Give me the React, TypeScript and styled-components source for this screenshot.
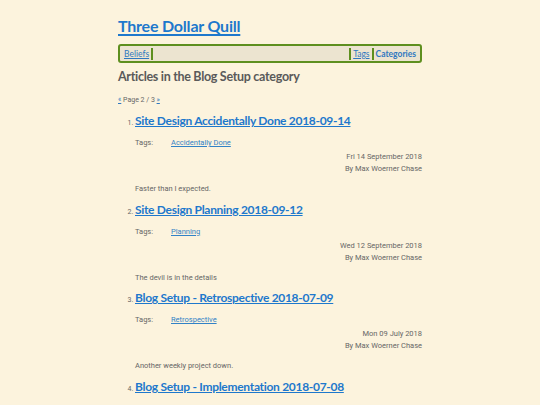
import React from "react";
import styled, { createGlobalStyle } from "styled-components";

const Global = createGlobalStyle`
  html, body { margin: 0; padding: 0; background: #fcf3dd; }
  body { font-family: "Roboto", "DejaVu Serif", serif; }
`;

const headFont = `"Lato", "Noto Sans", sans-serif`;

const Page = styled.div`
  width: 304px;
  margin: 0 auto;
  padding-top: 15px;
  color: #5f5f5f;
`;

const SiteTitle = styled.h1`
  margin: 0;
  font-family: ${headFont};
  font-weight: 700;
  font-size: 16px;
  letter-spacing: -0.2px;
  line-height: 22px;
  a { color: #1e78cc; text-decoration: underline; text-decoration-thickness: 1.5px; text-underline-offset: 2px; }
`;

const Nav = styled.nav`
  margin-top: 7px;
  display: flex;
  align-items: center;
  height: 13px;
  padding: 1px 2px;
  border: 2px solid #5e8f1f;
  border-radius: 3px;
  background: #ece4d0;
  font-family: ${headFont};
  font-size: 8.5px;
`;

const NavLink = styled.a<{ $bold?: boolean; $left?: boolean; $right?: boolean }>`
  color: #2f78c0;
  font-weight: ${(p) => (p.$bold ? 700 : 400)};
  text-decoration: ${(p) => (p.$bold ? "none" : "underline")};
  padding: 0 2px;
  line-height: 12px;
  border-left: ${(p) => (p.$left ? "2px solid #5e8f1f" : "none")};
  border-right: ${(p) => (p.$right ? "2px solid #5e8f1f" : "none")};
`;

const Spacer = styled.div`
  flex: 1;
`;

const Heading = styled.h2`
  margin: 6px 0 0;
  font-family: ${headFont};
  font-weight: 700;
  font-size: 12.5px;
  letter-spacing: -0.3px;
  line-height: 16px;
  color: #5a5a5a;
`;

const Pager = styled.p`
  margin: 10px 0 0;
  font-size: 7px;
  line-height: 10px;
  color: #666;
  a { color: #2f78c0; }
`;

const List = styled.ol`
  margin: 7px 0 0;
  padding-left: 17px;
  font-size: 7.5px;
  color: #666;
`;

const Item = styled.li`
  margin-bottom: 6.7px;
  &::marker { font-size: 7px; }
`;

const ArticleTitle = styled.h3`
  display: inline;
  margin: 0;
  font-family: ${headFont};
  font-weight: 700;
  font-size: 12px;
  letter-spacing: -0.3px;
  line-height: 18px;
  a { color: #1e78cc; text-decoration: underline; text-underline-offset: 1px; }
`;

const TagsRow = styled.div`
  display: flex;
  margin-top: 8px;
  font-size: 7.5px;
  line-height: 10px;
`;

const TagLabel = styled.span`
  width: 36px;
  color: #666;
`;

const TagLink = styled.a`
  color: #3282c6;
  text-decoration: underline;
`;

const Meta = styled.div`
  margin-top: 3px;
  text-align: right;
  font-size: 7.5px;
  line-height: 12px;
  color: #666;
`;

const Summary = styled.p`
  margin: 9px 0 0;
  font-size: 7.5px;
  line-height: 10px;
  color: #666;
`;

const articles = [
  { title: "Site Design Accidentally Done 2018-09-14", tag: "Accidentally Done", date: "Fri 14 September 2018", summary: "Faster than I expected." },
  { title: "Site Design Planning 2018-09-12", tag: "Planning", date: "Wed 12 September 2018", summary: "The devil is in the details" },
  { title: "Blog Setup - Retrospective 2018-07-09", tag: "Retrospective", date: "Mon 09 July 2018", summary: "Another weekly project down." },
  { title: "Blog Setup - Implementation 2018-07-08", tag: "Implementation", date: "Sun 08 July 2018", summary: "Getting it running." },
];

export default function App() {
  return (
    <>
      <Global />
      <Page>
        <SiteTitle><a href="#">Three Dollar Quill</a></SiteTitle>
        <Nav>
          <NavLink href="#" $right>Beliefs</NavLink>
          <Spacer />
          <NavLink href="#" $left>Tags</NavLink>
          <NavLink href="#" $left $bold>Categories</NavLink>
        </Nav>
        <Heading>Articles in the Blog Setup category</Heading>
        <Pager><a href="#">«</a> Page 2 / 3 <a href="#">»</a></Pager>
        <List>
          {articles.map((a) => (
            <Item key={a.title}>
              <ArticleTitle><a href="#">{a.title}</a></ArticleTitle>
              <TagsRow>
                <TagLabel>Tags:</TagLabel>
                <TagLink href="#">{a.tag}</TagLink>
              </TagsRow>
              <Meta>
                <div>{a.date}</div>
                <div>By Max Woerner Chase</div>
              </Meta>
              <Summary>{a.summary}</Summary>
            </Item>
          ))}
        </List>
      </Page>
    </>
  );
}
